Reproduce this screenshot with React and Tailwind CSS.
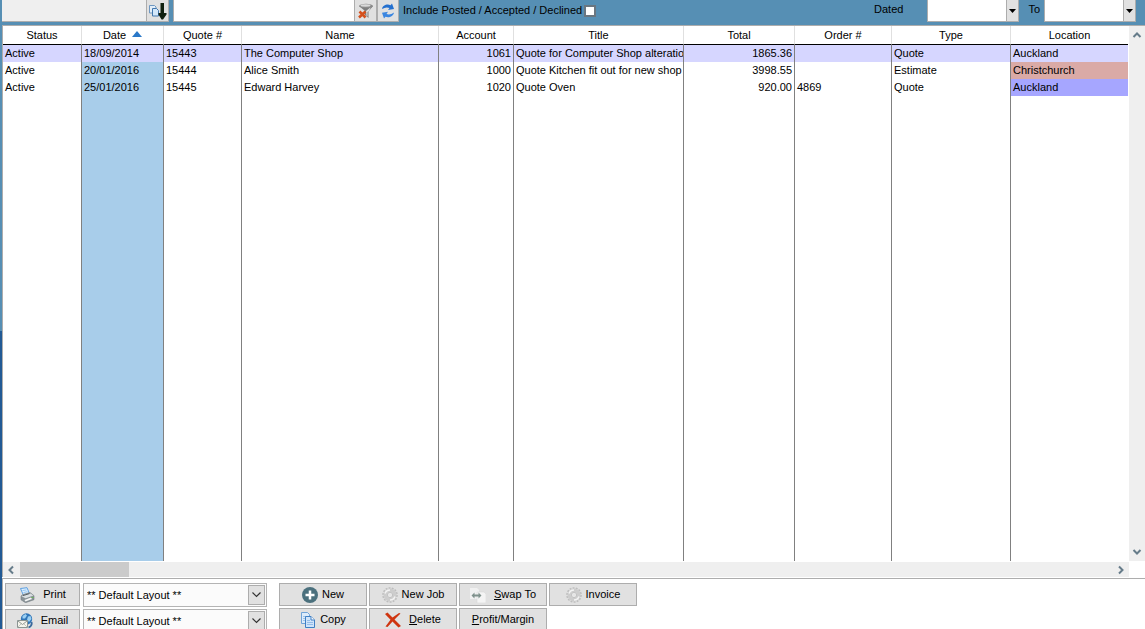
import React, { useState } from 'react';

const columns = [
  { key: 'status', label: 'Status', width: 'w-[79px]' },
  { key: 'date', label: 'Date', width: 'w-[82px]' },
  { key: 'quote', label: 'Quote #', width: 'w-[78px]' },
  { key: 'name', label: 'Name', width: 'w-[197px]' },
  { key: 'account', label: 'Account', width: 'w-[75px]', right: true },
  { key: 'title', label: 'Title', width: 'w-[170px]' },
  { key: 'total', label: 'Total', width: 'w-[111px]', right: true },
  { key: 'order', label: 'Order #', width: 'w-[97px]' },
  { key: 'type', label: 'Type', width: 'w-[119px]' },
  { key: 'location', label: 'Location', width: '' },
];

const quotes = [
  { status: 'Active', date: '18/09/2014', quote: '15443', name: 'The Computer Shop', account: '1061', title: 'Quote for Computer Shop alteration', total: '1865.36', order: '', type: 'Quote', location: 'Auckland' },
  { status: 'Active', date: '20/01/2016', quote: '15444', name: 'Alice Smith', account: '1000', title: 'Quote Kitchen fit out for new shop', total: '3998.55', order: '', type: 'Estimate', location: 'Christchurch' },
  { status: 'Active', date: '25/01/2016', quote: '15445', name: 'Edward Harvey', account: '1020', title: 'Quote Oven', total: '920.00', order: '4869', type: 'Quote', location: 'Auckland' },
];

const locationColors = {
  Auckland: 'bg-[#a6a6ff]',
  Christchurch: 'bg-[#daaaa6]',
};

const cellColor = (key, row, selected) => {
  if (selected) return 'bg-[#d6d6ff]';
  if (key === 'date') return 'bg-[#a8cdea]';
  if (key === 'location' && row) return locationColors[row.location];
  return '';
};

const PagesDownIcon = () => (
  <svg width="18" height="18" viewBox="0 0 18 18" aria-hidden="true">
    <path d="M.5 3.500h5l1.500 1.500v6H.5z" fill="#e3eef8" stroke="#6f97c0" />
    <path d="M3.500 6.500h4l2 2v5.500h-6z" fill="#d3e7fa" stroke="#4377ad" />
    <path d="M11.500 1h3.500v10h2.500v1.500L14 17.500h-1.500L9.500 12.500V11h2z" fill="#10200f" />
  </svg>
);

const ClearFilterIcon = () => (
  <svg width="16" height="16" viewBox="0 0 16 16" aria-hidden="true">
    <path d="M1 3l6 5v4l3.500 3V8.500L15 3z" fill="#7d7d7d" />
    <path d="M8 8l5-4-2 4-1.500 1v4.500l-1-.8z" fill="#dedede" />
    <ellipse cx="8" cy="3" rx="7" ry="2.200" fill="#8a8a8a" />
    <ellipse cx="7.500" cy="2.500" rx="5" ry="1.200" fill="#dadada" />
    <path d="M1.500 8.500l6 6M7.500 8.500l-6.500 6" stroke="#d4501c" strokeWidth="2.600" />
  </svg>
);

const RefreshIcon = () => (
  <svg width="16" height="16" viewBox="0 0 16 16" aria-hidden="true">
    <path d="M2 6C2.500 2.500 7 .5 10.500 2.200L12 .5l2 5.500-6 1 1.500-2C7 4 4.500 4.500 2 6z" fill="#2470cf" />
    <path d="M14 9.500c-.5 3.700-5 5.800-8.500 4.300L4 15.500 2 9.800l6-1-1.500 2.200c2.500 1 5 .3 7.500-1.500z" fill="#3b86e0" />
  </svg>
);

const PrinterIcon = () => (
  <svg width="16" height="16" viewBox="0 0 16 16" aria-hidden="true">
    <path d="M1.500 1.500L8 .7l2.500 6L4.500 8.500z" fill="#dff0ff" stroke="#5c9fe0" />
    <path d="M3.500 3.500l4-.6M4.500 5.500l4-.8" stroke="#8fc2f0" />
    <path d="M2 9l2-1.500 7-2 4 3.200v4l-8.500 3L2 12.800z" fill="#8b9499" stroke="#727b80" strokeWidth=".6" />
    <path d="M2.500 9.300l4 2 8-2.800-3-2L5 8z" fill="#d9dee1" />
    <path d="M4 8.600l6.500-2" stroke="#596166" />
    <path d="M5.500 13l6.500-2.500 1 1.500-6.500 2.500z" fill="#f6f6f6" />
    <path d="M12.500 10.500h2" stroke="#69bb55" />
  </svg>
);

const EmailIcon = () => (
  <svg width="16" height="16" viewBox="0 0 16 16" aria-hidden="true">
    <circle cx="9.500" cy="6" r="5.700" fill="#2f75b8" />
    <path d="M5.500 3l3-2 1.500 1.500-2 3-2.500 0zM11 3.500l2.500-.5 1 3-2.500 3-2-2.500z" fill="#9bd0f3" />
    <path d="M14.500 9q1 4-3 5.500" stroke="#38699c" fill="none" strokeWidth="1.800" />
    <path d="M.5 7.500h10v7H.5z" fill="#f5f4ec" stroke="#8b9593" />
    <path d="M1 8l4.500 3.500L10 8" stroke="#8f9692" fill="none" />
    <path d="M1 14l3-3M10 14l-3-3" stroke="#c2c6c0" fill="none" />
  </svg>
);

const PlusIcon = () => (
  <svg width="16" height="16" viewBox="0 0 16 16" aria-hidden="true">
    <circle cx="8" cy="8" r="8" fill="#4b707d" />
    <path d="M8 3.500v9M3.500 8h9" stroke="#fff" strokeWidth="2.500" />
  </svg>
);

const GearIcon = () => (
  <svg width="16" height="16" viewBox="0 0 16 16" fill="none" aria-hidden="true">
    <circle cx="8" cy="8" r="7" stroke="#bdbdbd" strokeWidth="1.600" strokeDasharray="1.900 1.240" />
    <circle cx="8" cy="8" r="4.800" stroke="#cdcdcd" strokeWidth="3.400" />
    <circle cx="8" cy="8" r="2.700" fill="#e6e6e6" stroke="#b5b5b5" strokeWidth=".7" />
    <path d="M3 6.500Q4.200 3.200 8 3M13 9.500Q11.800 12.800 8 13" stroke="#f3f3f3" strokeWidth="1.500" />
  </svg>
);

const SwapIcon = () => (
  <svg width="16" height="16" viewBox="0 0 16 16" aria-hidden="true">
    <path d="M0 1h7l2 2v9H0z" fill="#f1f1f1" />
    <path d="M7 5h7l2 2v9H7z" fill="#f4f4f4" stroke="#d7d7d7" strokeWidth=".5" />
    <path d="M1.500 8.500l3-3V7.500h4V5.500l3 3-3 3V9.500h-4v2z" fill="#7f918c" />
  </svg>
);

const CopyIcon = () => (
  <svg width="16" height="16" viewBox="0 0 16 16" aria-hidden="true">
    <path d="M1.500.5h6l2 2v9h-8z" fill="#dcebfa" stroke="#6fa3d8" />
    <path d="M3 4.500h4M3 6.500h3M3 8.500h3" stroke="#9ec3e8" />
    <path d="M5.500 4.500h5.500l3.500 3.500v7.500h-9z" fill="#cfe4fa" stroke="#3f7fc4" />
    <path d="M11 4.500v3.500h3.500" fill="#fff" stroke="#3f7fc4" />
    <path d="M7 8.500h3M7 10.500h6M7 12.500h6" stroke="#94bde8" />
  </svg>
);

const DeleteIcon = () => (
  <svg width="16" height="16" viewBox="0 0 16 16" aria-hidden="true">
    <path d="M0 2l2.500-1.500L7.500 5.500 14 1l1.500.5L9.500 7.500l6.500 6.500-2.500 1.500-6-6L2.500 15 .5 14.500 5.500 7.800z" fill="#cf3510" />
  </svg>
);

const Chevron = ({ d }) => (
  <svg width="10" height="10" viewBox="0 0 10 10" fill="none" stroke="#667c8a" strokeWidth="2" aria-hidden="true">
    <path d={d} />
  </svg>
);

const ToolButton = ({ label, width, children }) => (
  <button type="button" aria-label={label} className={`flex shrink-0 items-center justify-center border border-t-0 border-[#adadad] bg-[#e1e1e1] ${width}`}>
    {children}
  </button>
);

const ActionButton = ({ icon, width, gap, children }) => (
  <button type="button" className={`flex h-[23px] items-center justify-center border border-[#adadad] bg-[#e1e1e1] ${width || 'w-22'} ${gap || 'gap-1'}`}>
    {icon}
    <span>{children}</span>
  </button>
);

const LayoutSelect = ({ label }) => (
  <div className="relative h-6 w-46">
    <select aria-label={label} className="h-full w-full appearance-none border border-[#b4b4b4] bg-[#fbfbfb] pl-[3px] outline-none">
      <option>** Default Layout **</option>
    </select>
    <span className="pointer-events-none absolute inset-y-[2px] right-[2px] flex w-[17px] items-center justify-center border border-[#adadad] bg-[#e1e1e1]">
      <svg width="9" height="6" viewBox="0 0 9 6" fill="none" stroke="#333" strokeWidth="1.200" aria-hidden="true">
        <path d="M.5 .5l4 4 4-4" />
      </svg>
    </span>
  </div>
);

const DateField = ({ id, label, margin }) => (
  <div className={`flex ${margin}`}>
    <label htmlFor={id} className="pt-[2px]">{label}</label>
    <input id={id} type="text" className={`w-[79px] border-b border-l border-[#adadad] bg-white px-1 outline-none ${id === 'dated' ? 'ml-6' : 'ml-1'}`} />
    <button type="button" aria-label={`Choose ${label} date`} className="flex w-[13px] items-center justify-center border border-t-0 border-[#adadad] bg-[#e1e1e1]">
      <svg className="shrink-0" width="7" height="4" viewBox="0 0 7 4" aria-hidden="true"><path d="M0 0h7L3.500 4z" fill="#000" /></svg>
    </button>
  </div>
);

const QuoteTable = () => {
  const [selected, setSelected] = useState(0);

  return (
    <table className="h-full w-full table-fixed border-separate border-spacing-0">
      <thead>
        <tr>
          {columns.map((col, i) => (
            <th key={col.key} className={`h-[19px] border-b border-black p-0 font-normal ${col.width} ${i < columns.length - 1 ? 'border-r border-r-[#e0e0e0]' : ''}`}>
              {col.label}
              {col.key === 'date' && (
                <svg className="mb-[3px] ml-[6px] inline-block" width="10" height="6" viewBox="0 0 10 6" aria-hidden="true">
                  <path d="M5 0l5 6H0z" fill="#2a78c8" />
                </svg>
              )}
            </th>
          ))}
        </tr>
      </thead>
      <tbody>
        {quotes.map((row, index) => (
          <tr key={row.quote} onClick={() => setSelected(index)}>
            {columns.map((col, i) => (
              <td key={col.key} className={`h-[17px] overflow-hidden py-0 pl-[2px] whitespace-nowrap ${col.right ? 'pr-[2px] text-right' : ''} ${i < columns.length - 1 ? 'border-r border-[#808080]' : ''} ${cellColor(col.key, row, index === selected)}`}>
                {row[col.key]}
              </td>
            ))}
          </tr>
        ))}
        <tr className="h-full" aria-hidden="true">
          {columns.map((col, i) => (
            <td key={col.key} className={`p-0 ${i < columns.length - 1 ? 'border-r border-[#808080]' : ''} ${cellColor(col.key)}`} />
          ))}
        </tr>
      </tbody>
    </table>
  );
};

const App = () => {
  const [includePosted, setIncludePosted] = useState(false);

  return (
    <div className="flex h-screen overflow-hidden bg-white font-['Liberation_Sans',Arial,sans-serif] text-[11px] leading-[15px] text-black">
      <div className="flex w-[2px] shrink-0 flex-col bg-[#225a95]">
        <div className="h-[331px] bg-[#568fb4]" />
      </div>

      <div className="flex min-w-0 flex-1 flex-col">
        <header className="flex h-[25px] shrink-0 bg-[#568fb4] pb-[3px]">
          <input type="text" aria-label="Search column" className="w-36 border-b border-[#adadad] bg-[#efefef] px-1 outline-none" />
          <ToolButton label="Sort order" width="w-[23px]"><PagesDownIcon /></ToolButton>
          <input type="text" aria-label="Search" className="ml-1 w-[181px] border-b border-l border-[#adadad] bg-white px-1 outline-none" />
          <ToolButton label="Clear filter" width="w-[23px]"><ClearFilterIcon /></ToolButton>
          <ToolButton label="Refresh" width="w-[22px]"><RefreshIcon /></ToolButton>
          <label className="ml-1 flex items-center gap-[2px] pb-px">
            Include Posted / Accepted / Declined
            <input type="checkbox" checked={includePosted} onChange={(e) => setIncludePosted(e.target.checked)} className="size-3 appearance-none border-2 border-[#6a7680] bg-white checked:bg-[#4b707d]" />
          </label>
          <DateField id="dated" label="Dated" margin="ml-auto" />
          <DateField id="to" label="To" margin="ml-[9px] mr-[9px]" />
        </header>

        <main className="flex min-h-0 flex-1 flex-col border-t border-l border-[#adadad]">
          <div className="flex min-h-0 flex-1">
            <div className="min-w-0 flex-1">
              <QuoteTable />
            </div>
            <div className="ml-px flex w-4 shrink-0 flex-col items-center justify-between bg-[#efefef] py-1">
              <button type="button" aria-label="Scroll up"><Chevron d="M1.500 7L5 3.500 8.500 7" /></button>
              <button type="button" aria-label="Scroll down"><Chevron d="M1.500 3L5 6.500 8.500 3" /></button>
            </div>
          </div>
          <div className="mt-px mr-4 flex h-[15px] shrink-0 items-center justify-between bg-[#efefef] px-[3px]">
            <button type="button" aria-label="Scroll left"><Chevron d="M7 1.500L3.500 5 7 8.500" /></button>
            <div className="ml-1 h-full w-[109px] bg-[#cbcbcb]" />
            <button type="button" aria-label="Scroll right" className="ml-auto"><Chevron d="M3 1.500L6.500 5 3 8.500" /></button>
          </div>
        </main>

        <footer className="mt-px flex h-[51px] shrink-0 items-start gap-3 overflow-hidden border-t border-l border-[#adadad] pt-1 pl-[2px]">
          <div className="grid grid-cols-[75px_184px] gap-x-[3px] gap-y-[2px]">
            <ActionButton width="w-[75px]" gap="gap-2" icon={<PrinterIcon />}>Print</ActionButton>
            <LayoutSelect label="Print layout" />
            <ActionButton width="w-[75px]" gap="gap-2" icon={<EmailIcon />}>Email</ActionButton>
            <LayoutSelect label="Email layout" />
          </div>
          <div className="grid grid-cols-[88px_88px_88px_88px] gap-[2px]">
            <ActionButton icon={<PlusIcon />}>New</ActionButton>
            <ActionButton icon={<GearIcon />}>New Job</ActionButton>
            <ActionButton gap="gap-2" icon={<SwapIcon />}><u>S</u>wap To</ActionButton>
            <ActionButton icon={<GearIcon />}>Invoice</ActionButton>
            <ActionButton icon={<CopyIcon />}>Copy</ActionButton>
            <ActionButton gap="gap-2" icon={<DeleteIcon />}><u>D</u>elete</ActionButton>
            <ActionButton><u>P</u>rofit/Margin</ActionButton>
          </div>
        </footer>
      </div>
    </div>
  );
};

export default App;
